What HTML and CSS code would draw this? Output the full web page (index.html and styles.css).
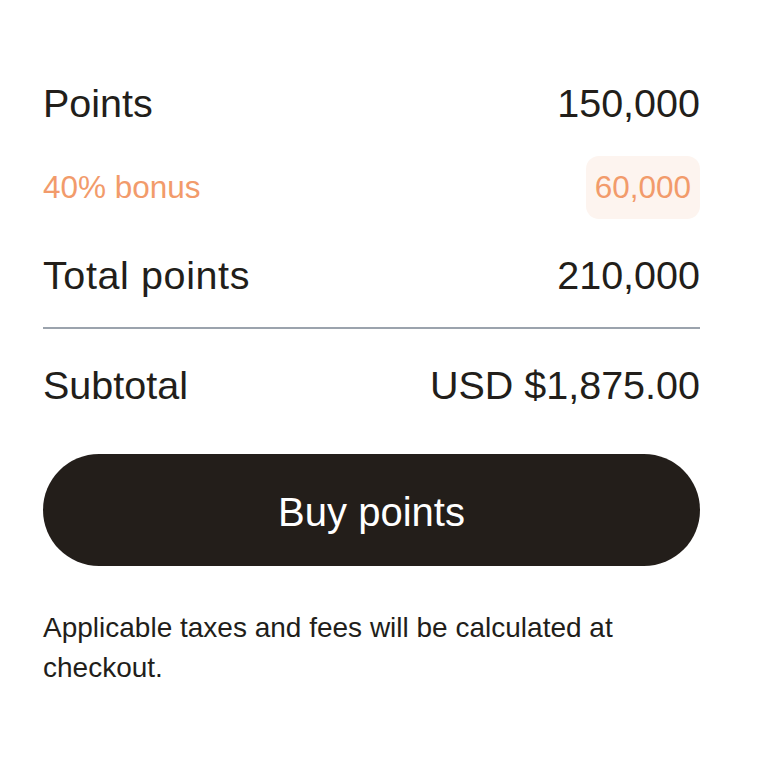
FILE: index.html
```html
<!DOCTYPE html>
<html lang="en">
<head>
<meta charset="utf-8">
<title>Buy points</title>
<link rel="stylesheet" href="styles.css">
</head>
<body>
<main class="summary">
  <div class="row row-main row-points">
    <span>Points</span>
    <span>150,000</span>
  </div>
  <div class="row row-bonus">
    <span>40% bonus</span>
    <span class="bonus-pill">60,000</span>
  </div>
  <div class="row row-main row-total">
    <span class="label-wide">Total points</span>
    <span>210,000</span>
  </div>
  <hr class="divider">
  <div class="row row-main row-subtotal">
    <span>Subtotal</span>
    <span>USD $1,875.00</span>
  </div>
  <button class="buy-btn" type="button">Buy points</button>
  <p class="note">Applicable taxes and fees will be calculated at checkout.</p>
</main>
</body>
</html>
```

FILE: styles.css
```css
* {
  box-sizing: border-box;
}

html, body {
  margin: 0;
  padding: 0;
  background: #ffffff;
}

body {
  font-family: "Liberation Sans", Arial, Helvetica, sans-serif;
  color: #221e1a;
}

.summary {
  display: flex;
  flex-direction: column;
  padding: 79px 74px 40px 43px;
}

.row {
  display: flex;
  justify-content: space-between;
  align-items: center;
}

.row-main {
  font-size: 39.5px;
  line-height: 48px;
  height: 48px;
}

.label-wide {
  letter-spacing: 0.6px;
}

.row-bonus {
  margin-top: 29px;
  height: 63px;
  font-size: 31.5px;
  color: #f29b6b;
}

.bonus-pill {
  display: flex;
  align-items: center;
  height: 63px;
  padding: 0 9px;
  border-radius: 13px;
  background: #fdf4ef;
}

.row-total {
  margin-top: 32px;
}

.divider {
  margin: 28px 0 0;
  border: 0;
  height: 2px;
  background: #9ba3ad;
}

.row-subtotal {
  margin-top: 32px;
}

.buy-btn {
  margin-top: 45px;
  height: 112px;
  width: 100%;
  padding: 4px 0 0;
  border: 0;
  border-radius: 56px;
  background: #231e1a;
  color: #ffffff;
  font-family: inherit;
  font-size: 40px;
  cursor: pointer;
}

.note {
  margin: 42px 0 0;
  font-size: 28px;
  line-height: 40px;
  color: #221e1a;
}
```
